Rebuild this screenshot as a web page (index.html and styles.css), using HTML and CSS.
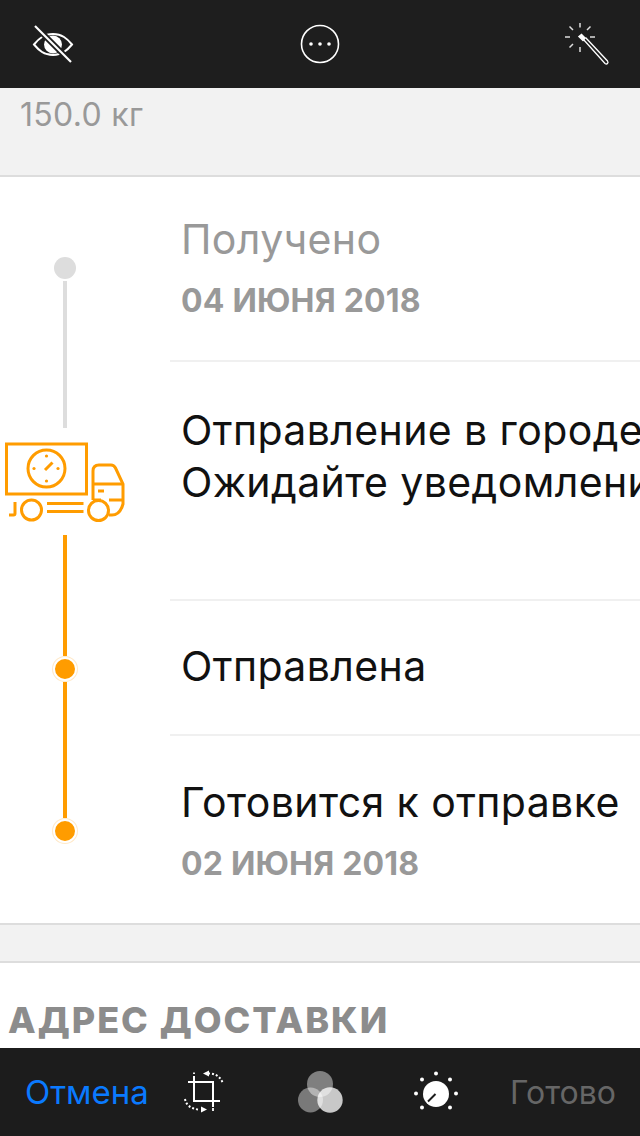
FILE: index.html
```html
<!DOCTYPE html>
<html lang="ru">
<head>
    <meta charset="UTF-8">
    <meta name="viewport" content="width=device-width, initial-scale=1.0">
    <title>Отправление</title>
    <link rel="stylesheet" href="styles.css">
</head>
<body>
    <div class="screen">
        <header class="topbar">
            <svg class="tool" viewBox="0 0 50 50" fill="none" stroke="#fff" stroke-width="2">
                <path d="M9 25.500C14 19.500 19 15 28 15C37 15 42 19.500 47 25.500C42 31.500 37 36 28 36C19 36 14 31.500 9 25.500Z"/>
                <circle cx="28" cy="25.500" r="9" fill="#fff" stroke="none"/>
                <path d="M10 7L46 43" stroke="#1e1e1e" stroke-width="6"/>
                <path d="M10 7L46 43" stroke-width="2.200"/>
            </svg>
            <svg class="tool" viewBox="0 0 50 50" fill="none" stroke="#fff" stroke-width="1.600">
                <circle cx="25" cy="25" r="18.500"/>
                <g fill="#fff" stroke="none">
                    <circle cx="16" cy="25" r="1.800"/>
                    <circle cx="25" cy="25" r="1.800"/>
                    <circle cx="34" cy="25" r="1.800"/>
                </g>
            </svg>
            <svg class="tool" viewBox="0 0 50 50" fill="none" stroke="#fff" stroke-width="1.500">
                <path d="M15 4V8.500M15 28V33M0 18H5M25 18H30M4.500 7.500L8 11M25.500 7.500L22 11M4.500 28.500L8 25" stroke="#ddd"/>
                <path d="M18.500 20.500L40 44.500Q41.500 45.500 42.500 44.500Q43.500 43.500 42.500 42L20.500 18.500" stroke-width="1.300"/>
                <path d="M14 17.500L16.500 15.500L20 19L18 21.500Z" fill="#fff" stroke="#fff"/>
            </svg>
        </header>

        <main class="content">
            <section class="weight">150.0 кг</section>

            <section class="tracking">
                <aside class="timeline">
                    <span class="dot dot-gray"></span>
                    <span class="line line-gray"></span>
                    <svg class="truck" viewBox="0 0 130 85" fill="none" stroke="#ff9c00" stroke-width="3">
                        <rect x="6.500" y="4" width="80" height="50"/>
                        <circle cx="46.500" cy="28.500" r="18.500"/>
                        <path d="M45 30L52.500 22.500"/>
                        <g fill="#ff9c00" stroke="none">
                            <circle cx="46.500" cy="16" r="1.600"/>
                            <circle cx="46.500" cy="41" r="1.600"/>
                            <circle cx="34" cy="28.500" r="1.600"/>
                            <circle cx="58" cy="28.500" r="1.600"/>
                        </g>
                        <path d="M15 62V73.500Q15 75 13.500 75H9"/>
                        <circle cx="31.500" cy="70" r="10"/>
                        <path d="M47 63.500H83.500M47 71.500H83.500"/>
                        <path d="M93 60V31Q93 25 99 25H111Q114 25 115.500 28L123 44V64Q120 75 112 75H109"/>
                        <path d="M93 44H123M93 60H101M109 60H123"/>
                        <path d="M98 51H104"/>
                        <circle cx="98.500" cy="70.500" r="10" fill="#fff"/>
                    </svg>
                    <span class="line line-first"></span>
                    <span class="dot dot-orange"></span>
                    <span class="line line-second"></span>
                    <span class="dot dot-orange"></span>
                </aside>

                <div class="steps">
                    <div class="step step-received">
                        <p class="step-title muted">Получено</p>
                        <p class="step-date">04 ИЮНЯ 2018</p>
                    </div>
                    <div class="step step-city">
                        <p class="step-title">Отправление в городе</p>
                        <p class="step-title">Ожидайте уведомления</p>
                    </div>
                    <div class="step step-sent">
                        <p class="step-title">Отправлена</p>
                    </div>
                    <div class="step step-prepare">
                        <p class="step-title">Готовится к отправке</p>
                        <p class="step-date">02 ИЮНЯ 2018</p>
                    </div>
                </div>
            </section>

            <div class="spacer"></div>

            <section class="address">
                <h2>АДРЕС ДОСТАВКИ</h2>
            </section>
        </main>

        <footer class="bottombar">
            <span class="action action-cancel">Отмена</span>
            <svg class="tool tool-crop" viewBox="0 0 44 44" fill="none" stroke="#fff" stroke-width="2">
                <path d="M6 12H31V37M12 6V31H38"/>
                <path d="M12 2.500V4M31 38V41" stroke-width="1.800"/>
                <path d="M26 3.500C32 3 38 6 40.500 12.500" stroke-width="2" stroke-dasharray="2 2"/>
                <path d="M3 29C4 35 9 39 17 39.500" stroke-width="2" stroke-dasharray="2 2"/>
                <path d="M21 3.500L27 0.500V6.500Z" fill="#fff" stroke="none"/>
                <path d="M25 39.500L19 36.500V42.500Z" fill="#fff" stroke="none"/>
            </svg>
            <svg class="tool tool-filters" viewBox="0 0 48 48" fill="#fff">
                <circle cx="24" cy="16" r="13" fill-opacity="0.44"/>
                <circle cx="14.500" cy="32" r="12.500" fill-opacity="0.41"/>
                <circle cx="34" cy="32" r="12.700" fill-opacity="0.76"/>
            </svg>
            <svg class="tool tool-dial" viewBox="0 0 48 48" fill="#fff">
                <circle cx="24" cy="26" r="13"/>
                <path d="M16 33.500L23.500 26" stroke="#1c1c1c" stroke-width="2"/>
                <circle cx="24" cy="5.500" r="2"/>
                <circle cx="10" cy="11.500" r="2"/>
                <circle cx="38" cy="11.500" r="2"/>
                <circle cx="4" cy="25.500" r="2"/>
                <circle cx="44" cy="25.500" r="2"/>
                <circle cx="10" cy="39.500" r="2"/>
                <circle cx="38" cy="39.500" r="2"/>
            </svg>
            <span class="action action-done">Готово</span>
        </footer>
    </div>
</body>
</html>
```

FILE: styles.css
```css
html, body {
    margin: 0;
    padding: 0;
}
body {
    font-family: Inter, "Noto Sans", sans-serif;
    background: #fff;
}
p, h2 {
    margin: 0;
}
.screen {
    width: 640px;
    height: 1136px;
    display: flex;
    flex-direction: column;
    overflow: hidden;
}
.topbar {
    flex: none;
    height: 88px;
    box-sizing: border-box;
    padding: 19px 25px;
    background: #1e1e1e;
    display: flex;
    justify-content: space-between;
    align-items: flex-start;
}
.topbar .tool {
    width: 50px;
    height: 50px;
}
.content {
    flex: 1;
    min-height: 0;
    overflow: hidden;
}
.weight {
    height: 87px;
    box-sizing: border-box;
    padding: 7px 0 0 20px;
    background: #f2f2f2;
    color: #999;
    font-size: 32px;
    line-height: 40px;
    letter-spacing: 0.3px;
}
.tracking {
    display: flex;
    height: 746px;
    border-top: 2px solid #ddd;
    border-bottom: 2px solid #ddd;
}
.timeline {
    flex: none;
    width: 130px;
    padding-top: 80px;
    display: flex;
    flex-direction: column;
    align-items: center;
    box-sizing: border-box;
}
.dot {
    flex: none;
    border-radius: 50%;
}
.dot-gray {
    width: 22px;
    height: 22px;
    background: #ddd;
}
.dot-orange {
    width: 20px;
    height: 20px;
    margin: 1px 0;
    border: 2px solid #fff;
    background: #ff9c00;
    box-shadow: 0 0 0 1px #ffe9c9;
}
.line {
    flex: none;
    width: 4px;
    background: #ff9c00;
}
.line-gray {
    height: 147px;
    margin-top: 2px;
    background: #ddd;
}
.line-first {
    height: 121px;
    margin-top: 10px;
}
.line-second {
    height: 136px;
}
.truck {
    flex: none;
    width: 130px;
    height: 85px;
    margin-top: 12px;
}
.steps {
    flex: 1;
    min-width: 0;
    margin-left: 40px;
}
.step {
    padding-left: 11px;
    border-top: 2px solid #f0f0f0;
    white-space: nowrap;
}
.step:first-child {
    border-top: none;
}
.step-received {
    padding-top: 36px;
    padding-bottom: 39px;
}
.step-city {
    padding-top: 42px;
    padding-bottom: 91px;
}
.step-sent {
    padding-top: 39px;
    padding-bottom: 42px;
}
.step-prepare {
    padding-top: 40px;
}
.step-title {
    color: #111;
    font-size: 41px;
    line-height: 52px;
    letter-spacing: 0.4px;
}
.step-title.muted {
    color: #999;
}
.step-date {
    margin-top: 16px;
    color: #999;
    font-size: 32px;
    font-weight: 700;
    line-height: 40px;
    letter-spacing: 0.2px;
}
.spacer {
    height: 36px;
    background: #f2f2f2;
}
.address {
    border-top: 2px solid #ddd;
    padding: 37px 0 0 8px;
}
.address h2 {
    color: #8c8c8c;
    font-size: 36px;
    font-weight: 800;
    line-height: 40px;
    letter-spacing: 2px;
    white-space: nowrap;
}
.bottombar {
    flex: none;
    height: 88px;
    background: #1c1c1c;
    display: flex;
    align-items: center;
    padding-left: 25px;
}
.action {
    font-size: 32px;
}
.action-cancel {
    width: 122px;
    font-size: 33px;
    color: #0a7aff;
}
.action-done {
    margin-left: 50px;
    color: #666;
}
.tool-crop {
    width: 44px;
    height: 44px;
    margin-left: 35px;
}
.tool-filters {
    width: 48px;
    height: 48px;
    margin-left: 70px;
}
.tool-dial {
    width: 48px;
    height: 48px;
    margin-left: 68px;
}
```
